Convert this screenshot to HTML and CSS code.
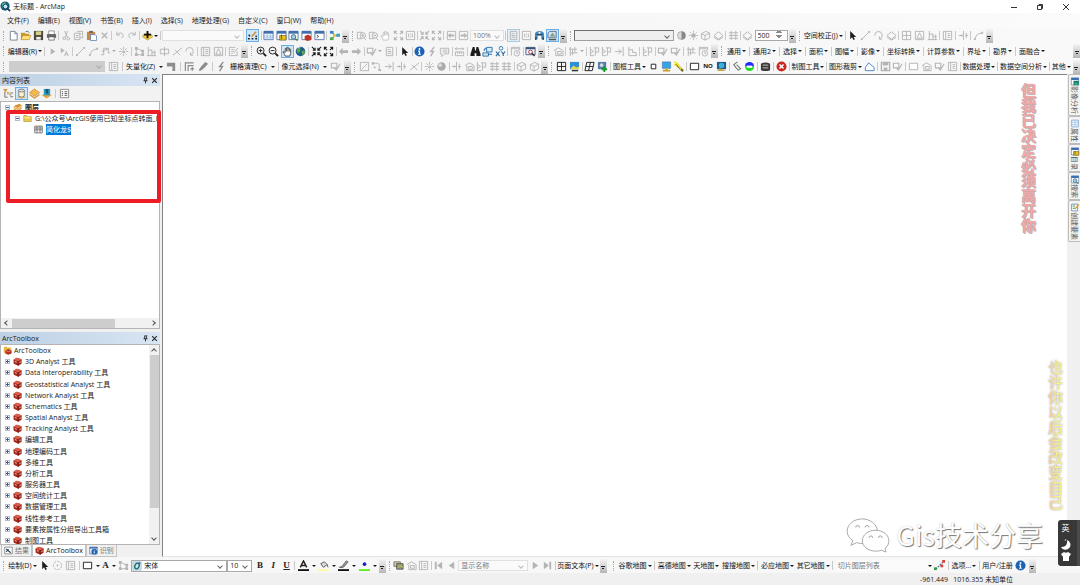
FILE: index.html
```
<!DOCTYPE html>
<html lang="zh-CN">
<head>
<meta charset="utf-8">
<title>无标题 - ArcMap</title>
<link rel="stylesheet" href="styles.css">
</head>
<body>
<svg class="sprite" aria-hidden="true">
  <defs>
    <symbol id="globe" viewBox="0 0 12 12"><circle cx="6" cy="6" r="5.2" fill="#1d5c8f"/><path d="M3 2q3-1 3 2t-3 4q-2-3 0-6zM7 6q3-2 4 0 0 3-3 4z" fill="#58a848"/><path d="M3 2q2-1 3-.5" stroke="#cfe6f5" fill="none"/></symbol>
    <symbol id="logo" viewBox="0 0 12 12"><circle cx="5.5" cy="5.5" r="5" fill="#185a7c"/><path d="M2 3l3-2 2 2-2 3-2 2z" fill="#4fb08a"/><circle cx="6" cy="6" r="2.6" fill="#bfe4f5" stroke="#173f58"/><path d="M8 8l3 3" stroke="#173f58" stroke-width="2"/></symbol>
    <symbol id="new" viewBox="0 0 12 12"><path d="M2.500 1.500h5l2.500 2.500v7h-7.500z" fill="#fff" stroke="#6e7f96"/><path d="M7.500 1.500v2.500h2.500" fill="none" stroke="#6e7f96"/></symbol>
    <symbol id="open" viewBox="0 0 12 12"><path d="M1 3h4l1 1h4v6H1z" fill="#c79a28"/><path d="M3 6h9l-2 4.500H1z" fill="#ffe07a" stroke="#a87d1c" stroke-width=".6"/><path d="M6 2q3-2 4 1" fill="none" stroke="#3b6ea5"/></symbol>
    <symbol id="save" viewBox="0 0 12 12"><path d="M1 1h10v10H1z" fill="#4a4a3a"/><path d="M3 1.500h6v4H3z" fill="#d8cf8a"/><path d="M3.500 7.500h5v3h-5z" fill="#eee"/></symbol>
    <symbol id="print" viewBox="0 0 12 12"><path d="M3 1h6v4H3z" fill="#fff" stroke="#777" stroke-width=".8"/><path d="M1 4.500h10v4H1z" fill="#666"/><path d="M3 7.500h6V11H3z" fill="#fff" stroke="#555" stroke-width=".8"/></symbol>
    <symbol id="cut" viewBox="0 0 12 12"><path d="M4 1l3 7M7 1L5 8" stroke="currentColor" fill="none"/><circle cx="3.500" cy="9" r="1.500" fill="none" stroke="currentColor"/><circle cx="8" cy="9.500" r="1.500" fill="none" stroke="currentColor"/></symbol>
    <symbol id="copy" viewBox="0 0 12 12"><path d="M1.500 3.500h6v7h-6zM4.500 1.500h6v7h-3M3 6h3M3 8h3M6 4h3" stroke="currentColor" fill="none"/></symbol>
    <symbol id="paste" viewBox="0 0 12 12"><path d="M1 2h9v9H1z" fill="#c88a4a"/><path d="M3.500 1h4v2h-4z" fill="#666"/><path d="M5 5h5l1.500 1.500V11.500H5z" fill="#fff" stroke="#4d77b8" stroke-width=".8"/></symbol>
    <symbol id="x" viewBox="0 0 12 12"><path d="M3 3l6 6M9 3L3 9" stroke="currentColor" stroke-width="1.500"/></symbol>
    <symbol id="undo" viewBox="0 0 12 12"><path d="M3 2v3.500h3.500M3 5q6-4 7 1 0 2-2 3" stroke="currentColor" fill="none"/></symbol>
    <symbol id="redo" viewBox="0 0 12 12"><path d="M9 2v3.500H5.500M9 5Q3 1 2 6q0 2 2 3" stroke="currentColor" fill="none"/></symbol>
    <symbol id="add" viewBox="0 0 12 12"><path d="M6 3l6 4-6 4-6-4z" fill="#f3cf3f" stroke="#b08a1c" stroke-width=".6"/><path d="M6 1v8M2 5h8" stroke="#111" stroke-width="2"/></symbol>
    <symbol id="edit" viewBox="0 0 12 12"><path d="M1 9.500h2M5 9.500h2M9 9.500h2M2 5l1 2M10 6v2" stroke="#222" stroke-width="1.500"/><path d="M5 7l5-5" stroke="#d28a2e" stroke-width="1.600"/></symbol>
    <symbol id="win" viewBox="0 0 12 12"><path d="M1 1.500h10v9H1z" fill="#fff" stroke="#5c7ba8"/><path d="M1 1h10v3H1z" fill="#3e6fb0"/></symbol>
    <symbol id="wtable" viewBox="0 0 12 12"><use href="#win"/><path d="M1 6.500h10M1 8.500h10M4.500 4v7M8 4v7" stroke="#8cb0de" stroke-width=".8"/></symbol>
    <symbol id="wcat" viewBox="0 0 12 12"><use href="#win"/><path d="M4 6h7v5H4z" fill="#e8c21d" stroke="#6b5a14" stroke-width=".7"/><path d="M6 5v5" stroke="#6b5a14"/></symbol>
    <symbol id="wsearch" viewBox="0 0 12 12"><use href="#win"/><circle cx="6" cy="7.500" r="2.500" fill="#9fd0e8" stroke="#3c6f85"/><path d="M8 9.500l2.500 2" stroke="#4d7a2d" stroke-width="1.400"/></symbol>
    <symbol id="wbox" viewBox="0 0 12 12"><use href="#win"/><path d="M4 6.500l4-1.500 3 2v4l-4 1-3-1.500z" fill="#c03427"/></symbol>
    <symbol id="wpy" viewBox="0 0 12 12"><use href="#win"/><path d="M3 5.500l2 1.500-2 1.500" stroke="#444" fill="none"/></symbol>
    <symbol id="wimg" viewBox="0 0 12 12"><use href="#win"/><path d="M4 5h7v6H4z" fill="#167a72"/><path d="M5 10l2-3 3 3z" fill="#57c85a"/></symbol>
    <symbol id="model" viewBox="0 0 12 12"><path d="M3 3l4 3-4 3M7 6h4" stroke="#555" fill="none"/><path d="M1 1h4v3H1z" fill="#3a86c8"/><path d="M1 8h4v3H1z" fill="#4aa84a"/><path d="M8 4h4v3.500H8z" fill="#3aa6c8"/><circle cx="6" cy="6" r="1.600" fill="#e6c232"/></symbol>
    <symbol id="zin" viewBox="0 0 12 12"><circle cx="5" cy="5" r="3.800" fill="none" stroke="currentColor"/><path d="M3 5h4M5 3v4" stroke="currentColor"/><path d="M8 8l3 3" stroke="currentColor" stroke-width="2"/></symbol>
    <symbol id="zout" viewBox="0 0 12 12"><circle cx="5" cy="5" r="3.800" fill="none" stroke="currentColor"/><path d="M3 5h4" stroke="currentColor"/><path d="M8 8l3 3" stroke="currentColor" stroke-width="2"/></symbol>
    <symbol id="hand" viewBox="0 0 12 12"><path d="M3.500 11Q3 9 1 6.500 2 5.500 3.500 7V3q1-1 1.500 0V1.800q1-1 1.500 0v.7q1-.800 1.500 0v1q1-.700 1.500.300V8L8.500 11zM5 3v3M6.500 2.500V6M8 3.500V6" fill="#fff" stroke="currentColor" stroke-width=".8"/></symbol>
    <symbol id="page" viewBox="0 0 12 12"><path d="M2.500 1.500h7v9h-7zM4 4h3M4 6h4M4 8h4" stroke="currentColor" fill="none"/></symbol>
    <symbol id="pzin" viewBox="0 0 12 12"><path d="M1.500 2.500h5v7h-5zM9 9l2 2" stroke="currentColor" fill="none"/><circle cx="7.500" cy="6" r="3" fill="#eee" stroke="currentColor"/><path d="M6 6h3M7.500 4.500v3" stroke="currentColor"/></symbol>
    <symbol id="pzout" viewBox="0 0 12 12"><path d="M1.500 2.500h5v7h-5zM9 9l2 2" stroke="currentColor" fill="none"/><circle cx="7.500" cy="6" r="3" fill="#eee" stroke="currentColor"/><path d="M6 6h3" stroke="currentColor"/></symbol>
    <symbol id="pback" viewBox="0 0 12 12"><path d="M1.500 1.500h9v9h-9z" fill="none" stroke="currentColor"/><path d="M2 6l3-3v2h4v2H5v2z" fill="currentColor"/></symbol>
    <symbol id="pfwd" viewBox="0 0 12 12"><path d="M1.500 1.500h9v9h-9z" fill="none" stroke="currentColor"/><path d="M10 6L7 3v2H3v2h4v2z" fill="currentColor"/></symbol>
    <symbol id="one" viewBox="0 0 12 12"><path d="M1.500 1.500h9v9h-9zM4 4v4M8 4v4M6 4v1M6 7v1" stroke="currentColor" fill="none"/></symbol>
    <symbol id="in4" viewBox="0 0 12 12"><path d="M1 1l3 3M11 1L8 4M1 11l3-3M11 11L8 8M4.500 2v2.500H2M7.500 2v2.500H10M4.500 10V7.500H2M7.500 10V7.500H10" stroke="currentColor" fill="none" stroke-width="1.200"/></symbol>
    <symbol id="out4" viewBox="0 0 12 12"><path d="M1.500 4V1.500H4M8 1.500h2.500V4M1.500 8v2.500H4M8 10.500h2.500V8M2 2l2.500 2.500M10 2L7.500 4.500M2 10l2.500-2.500M10 10L7.500 7.500" stroke="currentColor" fill="none" stroke-width="1.200"/></symbol>
    <symbol id="left" viewBox="0 0 12 12"><path d="M1 6l4-4v2.500h6v3H5V10z" fill="currentColor"/></symbol>
    <symbol id="right" viewBox="0 0 12 12"><path d="M11 6L7 2v2.500H1v3h6V10z" fill="currentColor"/></symbol>
    <symbol id="cursor" viewBox="0 0 12 12"><path d="M3.500 1v9l2-2 1.500 3 1.600-.800L7.200 7.500H10z" fill="currentColor"/></symbol>
    <symbol id="play" viewBox="0 0 12 12"><path d="M4 2.500v7L9 6z" fill="currentColor"/></symbol>
    <symbol id="playa" viewBox="0 0 12 12"><path d="M2 2v6l4-3z" fill="currentColor"/><path d="M6 11l2-5 2 5M7 9h2" stroke="currentColor" fill="none"/></symbol>
    <symbol id="line" viewBox="0 0 12 12"><path d="M2.500 9.500l7-7" stroke="currentColor"/><path d="M1 9h2v2H1zM9 1h2v2H9z" fill="currentColor"/></symbol>
    <symbol id="arc" viewBox="0 0 12 12"><path d="M2.500 9.500q1-6 7-6" stroke="currentColor" fill="none"/><path d="M1 9h2v2H1zM9 2h2v2H9z" fill="currentColor"/></symbol>
    <symbol id="trace" viewBox="0 0 12 12"><path d="M1 9.500h3v-7h5v5h2M2 6l7-3" stroke="currentColor" fill="none"/></symbol>
    <symbol id="star" viewBox="0 0 12 12"><path d="M6 1v10M1 6h10M2.500 2.500l7 7M9.500 2.500l-7 7" stroke="currentColor" stroke-dasharray="3 1"/></symbol>
    <symbol id="poly" viewBox="0 0 12 12"><path d="M2.500 2.500l7 3v4l-7 0z" stroke="currentColor" fill="none"/><path d="M1 1h3v3H1zM8 4h3v3H8zM1 8h3v3H1zM8 8h3v3H8z" fill="currentColor"/></symbol>
    <symbol id="bars" viewBox="0 0 12 12"><path d="M2.500 1v10M2.500 4.500h4M6.500 4v7M6.500 7h4M9.500 5v6M1 10.500h10" stroke="currentColor" fill="none"/></symbol>
    <symbol id="split" viewBox="0 0 12 12"><path d="M1.500 3.500h9v5h-9zM6 1v10" stroke="currentColor" fill="none"/></symbol>
    <symbol id="cross" viewBox="0 0 12 12"><path d="M1 10l10-8M3 4l6 6" stroke="currentColor"/></symbol>
    <symbol id="rot" viewBox="0 0 12 12"><path d="M2 6a4 4 0 1 1 5 3.500M7 7v3h3" stroke="currentColor" fill="none"/></symbol>
    <symbol id="grid" viewBox="0 0 12 12"><path d="M1.500 1.500h9v9h-9zM1.500 6h9M6 1.500v9" stroke="currentColor" fill="none"/></symbol>
    <symbol id="attr" viewBox="0 0 12 12"><path d="M1.500 1.500h9v9h-9zM4 1.500v9M6 4h3M6 6h3M6 8h3" stroke="currentColor" fill="none"/></symbol>
    <symbol id="atri" viewBox="0 0 12 12"><path d="M1.500 1.500h9v9h-9zM3 9l3-6 3 6z" stroke="currentColor" fill="none"/></symbol>
    <symbol id="slash" viewBox="0 0 12 12"><path d="M1.500 1.500h9v9h-9zM3 9l6-6" stroke="currentColor" fill="none"/></symbol>
    <symbol id="fillet" viewBox="0 0 12 12"><path d="M2 2.500h5q2 0 2 2v6" stroke="currentColor" fill="none"/><path d="M1 1h2v3H1zM8 9h3v2H8zM3 6h2v2H3z" fill="currentColor"/></symbol>
    <symbol id="note" viewBox="0 0 12 12"><path d="M10 6v4.500H1.500v-9H8M3.500 4H7M3.500 6H6M3.500 8H5M6 8l5-6" stroke="currentColor" fill="none"/></symbol>
    <symbol id="bolt" viewBox="0 0 12 12"><path d="M8 1L4 6h3l-3 5" stroke="currentColor" fill="none" stroke-width="1.500"/></symbol>
    <symbol id="popup" viewBox="0 0 12 12"><path d="M1.500 2.500h9v6H6l-3 3v-3H1.500zM4 4.500h5M4 6.500h5" stroke="currentColor" fill="none"/></symbol>
    <symbol id="ruler" viewBox="0 0 12 12"><path d="M1.500 6.500h9v4h-9zM4 6.500v2M6 6.500v2M8 6.500v2M1 3h10M3 1.500L1.500 3 3 4.500M9 1.500L10.500 3 9 4.500" stroke="currentColor" fill="none"/></symbol>
    <symbol id="info" viewBox="0 0 12 12"><circle cx="6" cy="6" r="5.500" fill="#1c62b5"/><circle cx="6" cy="3.300" r="1" fill="#fff"/><path d="M4.500 5.500H6V9M4.500 9h3" stroke="#fff" fill="none" stroke-width="1.300"/></symbol>
    <symbol id="bino" viewBox="0 0 12 12"><path d="M3 1h2l.500 4h1L7 1h2l2.500 8v2H7V8H5v3H.500V9z" fill="currentColor"/></symbol>
    <symbol id="bluebino" viewBox="0 0 12 12"><path d="M1 5q0-4 5-4t5 4v5H8V6H4v4H1z" fill="#4786b8"/><path d="M3 5h6M2 8v3M10 8v3" stroke="#29435a" stroke-width="1.500"/><path d="M5 2h2v2H5z" fill="#fff"/></symbol>
    <symbol id="goto" viewBox="0 0 12 12"><path d="M5 1.500h6v5H5zM1 7.500h6v3.500H1z" fill="#d9ecf9" stroke="#2870ad"/><path d="M2 5l2-3M7 9h4" stroke="#2870ad" stroke-width="1.200"/></symbol>
    <symbol id="xy" viewBox="0 0 12 12"><circle cx="6.500" cy="2.500" r="2" fill="none" stroke="#2c77b0"/><path d="M1 6l4 5M5 6l-4 5M7 6l2 2.500L11 6M9 8.500V11" stroke="#2364a0" stroke-width="1.200" fill="none"/></symbol>
    <symbol id="clock" viewBox="0 0 12 12"><path d="M1.500 10.500v-9h9V5M1 3h9" stroke="currentColor" fill="none"/><circle cx="7.500" cy="8" r="3" fill="none" stroke="currentColor"/><path d="M7.500 6v2h1.500" stroke="currentColor" fill="none"/></symbol>
    <symbol id="viewer" viewBox="0 0 12 12"><path d="M1 1.500h10v8H1z" fill="#eef" stroke="#4b5f7c"/><path d="M1 2.500h10" stroke="#35557f" stroke-width="2"/><circle cx="6" cy="6.500" r="2" fill="#fff" stroke="#a33"/><path d="M7.500 8l3 3" stroke="#333" stroke-width="1.600"/></symbol>
    <symbol id="pic" viewBox="0 0 12 12"><path d="M3 1.500h7v7H1v-5z" fill="#cfe0ee" stroke="#56728c"/><path d="M3 7l3-4 3 4z" fill="#7f9a7c"/><path d="M2 10.500h8" stroke="#555" stroke-width="1.500"/></symbol>
    <symbol id="half" viewBox="0 0 12 12"><circle cx="6" cy="6" r="4.300" fill="#ddd" stroke="#aaa"/><path d="M6 1.700a4.300 4.300 0 0 1 0 8.600z" fill="#888"/></symbol>
    <symbol id="sun" viewBox="0 0 12 12"><circle cx="6" cy="6" r="2.500" fill="currentColor"/><path d="M6 1v2M6 9v2M1 6h2M9 6h2M2.500 2.500l1 1M8.500 8.500l1 1M9.500 2.500l-1 1M3.500 8.500l-1 1" stroke="currentColor"/></symbol>
    <symbol id="dia" viewBox="0 0 12 12"><path d="M6 2l5 4-5 4-5-4zM1 8l5 3 5-3" fill="none" stroke="currentColor"/></symbol>
    <symbol id="house" viewBox="0 0 12 12"><path d="M1 5l5-3 5 3v5.500H3V5M5 6h4v3H5z" fill="none" stroke="currentColor"/></symbol>
    <symbol id="net" viewBox="0 0 12 12"><path d="M2.500 1v10M1 3.500h9M7.500 1v6M2.500 7.500h8M5 3.500V10" fill="none" stroke="currentColor"/></symbol>
    <symbol id="topo" viewBox="0 0 12 12"><path d="M1.500 1v9.500h4M1.500 3.500L5 6 1.500 8M5.500 2h5v4M7 2v8.500M7 6.500h4" fill="none" stroke="currentColor"/></symbol>
    <symbol id="check" viewBox="0 0 12 12"><path d="M1.500 2.500h6v5h-6zM4 7l3 3 4-7" fill="none" stroke="currentColor" stroke-width="1.200"/></symbol>
    <symbol id="vert" viewBox="0 0 12 12"><path d="M1 6h3M8 6h3M6 1v10M9 3v6" fill="none" stroke="currentColor"/><path d="M3 5h2v2H3z" fill="currentColor"/></symbol>
    <symbol id="ext" viewBox="0 0 12 12"><path d="M1 6h7M10 1v10M5 3.500L8 6 5 8.500" fill="none" stroke="currentColor"/></symbol>
    <symbol id="stair" viewBox="0 0 12 12"><path d="M2 1v9.500h9M2 4h4v3h4v3" fill="none" stroke="currentColor"/></symbol>
    <symbol id="hatch" viewBox="0 0 12 12"><path d="M1 3h10M1 6h10M1 9h10M3.500 1v10M8.500 1v10" fill="none" stroke="currentColor"/></symbol>
    <symbol id="sphere" viewBox="0 0 12 12"><circle cx="6" cy="6" r="4.600" fill="#aaa"/><circle cx="4.500" cy="4.500" r="2" fill="#ddd"/></symbol>
    <symbol id="boxes" viewBox="0 0 12 12"><path d="M1.500 4l5-2.500 4 2v5l-5 2.500-4-2zM1.500 4l4 2 5-2.500M5.500 6v5" fill="none" stroke="currentColor"/></symbol>
    <symbol id="pen" viewBox="0 0 12 12"><path d="M1 10q0-2 7-9l3 2q-6 7-9 8z" fill="currentColor"/></symbol>
    <symbol id="corner" viewBox="0 0 12 12"><path d="M1.500 11V2h9M4.500 11V5h6M7 8.500h4M9 6.500v4" fill="none" stroke="currentColor" stroke-width="1.300"/></symbol>
    <symbol id="stamp" viewBox="0 0 12 12"><path d="M1 2h9v9H7V6H1z" fill="currentColor"/></symbol>
    <symbol id="pcimg" viewBox="0 0 12 12"><path d="M1 1h10v8H1z" fill="#2e8ed6"/><path d="M1 9l4-4 3 2 3-1v3z" fill="#e6d44a"/><path d="M3 10.500h7" stroke="#333" stroke-width="1.500"/></symbol>
    <symbol id="skew" viewBox="0 0 12 12"><path d="M3 1.500h8l-2 9H1zM2 6h8M7 1.500l-2 9" fill="none" stroke="currentColor"/></symbol>
    <symbol id="pcadd" viewBox="0 0 12 12"><path d="M1 1h9v8H1z" fill="#557da6"/><circle cx="5" cy="4.500" r="2" fill="#cfd9e3"/><path d="M8 6v6M5 9h6" stroke="#159a2a" stroke-width="2"/></symbol>
    <symbol id="sq" viewBox="0 0 12 12"><path d="M3.500 3.500h5v5h-5z" fill="#fff" stroke="currentColor"/></symbol>
    <symbol id="rect" viewBox="0 0 12 12"><path d="M1.500 2.500h9v7h-9z" fill="#fff" stroke="currentColor"/></symbol>
    <symbol id="pc" viewBox="0 0 12 12"><path d="M1.500 1h9v7h-9z" fill="#38a2e6" stroke="#3570a0" stroke-width=".6"/><path d="M6 8v2M2 10.500h8" stroke="#c99d2b" stroke-width="2"/></symbol>
    <symbol id="wand" viewBox="0 0 12 12"><path d="M3 3l8 8" stroke="#6d6a2a" stroke-width="2.500"/><path d="M1 1l5 3M3 1l6 8M1 4l3 1" stroke="#f4e52c" stroke-width="1.500"/></symbol>
    <symbol id="pcglobe" viewBox="0 0 12 12"><path d="M1 1h10v8H1z" fill="#1f5a8c"/><circle cx="6" cy="5" r="3" fill="#3db0dd"/><path d="M1 11l3-3 7 3z" fill="#caa43a"/></symbol>
    <symbol id="call" viewBox="0 0 12 12"><path d="M6 1L2 4l2 3 3 3 3-2M5 4l4 4" fill="none" stroke="#777" stroke-width="1.200"/></symbol>
    <symbol id="disc" viewBox="0 0 12 12"><path d="M1 6a5 5 0 0 1 10 0z" fill="#1c2bff"/><path d="M1 6a5 5 0 0 0 10 0z" fill="#1ce01c"/><path d="M3 5h6v2.500H3z" fill="#fff"/></symbol>
    <symbol id="db" viewBox="0 0 12 12"><path d="M1 3q5-3 10 0v7q-5 2-10 0z" fill="#3a3a3a"/><path d="M3 4.500h6M3 7.500h6" stroke="#ccc"/></symbol>
    <symbol id="err" viewBox="0 0 12 12"><circle cx="6" cy="6" r="5.500" fill="#c9281f"/><path d="M3.800 3.800l4.400 4.400M8.200 3.800L3.800 8.200" stroke="#fff" stroke-width="1.600"/></symbol>
    <symbol id="penta" viewBox="0 0 12 12"><path d="M1.500 10.500V7L5 2l6 5v3.500z" fill="#fff" stroke="#3e86cf"/></symbol>
    <symbol id="dsave" viewBox="0 0 12 12"><path d="M1.500 1.500h9v9h-9z" fill="none" stroke="currentColor" stroke-width="1.500"/><path d="M3 2h6v3H3zM4 7h4v4H4z" fill="currentColor"/></symbol>
    <symbol id="toolbox" viewBox="0 0 12 12"><path d="M.5 3.500L5 1l6.500 2v6L7 11.500 1 9z" fill="#a5281d"/><path d="M.5 3.500L5 1l6.500 2L7 5.500z" fill="#d9604e"/><path d="M7 5.500v6" stroke="#741610"/><path d="M2.500 6l2.500 1M8.500 7.500l2-1" stroke="#f3d0c8" stroke-width="1.200"/></symbol>
    <symbol id="tbroot" viewBox="0 0 12 12"><path d="M1 1h4l1 1h5v7H1z" fill="#e6bd45"/><path d="M3 6l4-2 4.500 2v4L7 11.500 3 10z" fill="#b93123"/><path d="M3 6l4 1.500L11.500 6" stroke="#e88d7e" fill="none"/></symbol>
    <symbol id="layers" viewBox="0 0 12 12"><path d="M3 3l6-2 2.500 2v5L6 11 1 9V5z" fill="#d8913a"/><path d="M1 5l5 2 5.500-3M1 7l5 2 5.500-3" stroke="#fff0b8" fill="none"/></symbol>
    <symbol id="folder" viewBox="0 0 12 12"><path d="M1 2h4l1 1.500h5V10H1z" fill="#e9c84e" stroke="#a8842b" stroke-width=".7"/><path d="M2 5h8" stroke="#fff2ae" stroke-width="1.500"/></symbol>
    <symbol id="tbl" viewBox="0 0 12 12"><path d="M1 1.500h10v9H1z" fill="#fff" stroke="#555"/><path d="M1 4h10M1 6.500h10M4 1.500v9M8 1.500v9" stroke="#555"/></symbol>
    <symbol id="torder" viewBox="0 0 12 12"><path d="M0 1l5 0-2 4z" fill="#d99a3c"/><path d="M4 4l4 1-3 3z" fill="#e0ae5a"/><path d="M2 4v6h3M8 5.500h3M8 9.500h3M7 7.500h2" stroke="#6f6f6f" fill="none"/></symbol>
    <symbol id="tsource" viewBox="0 0 12 12"><path d="M3 3q3-2 6 0v6q-3 2-6 0z" fill="#fff3c8" stroke="#7c7c7c"/><ellipse cx="6" cy="2.800" rx="3.200" ry="1.500" fill="#e3e3e3" stroke="#777"/><path d="M2 10q4 2 8 0" fill="none" stroke="#c9a23c"/></symbol>
    <symbol id="tvis" viewBox="0 0 12 12"><path d="M6 1l5.500 4L6 9 .500 5z" fill="#f2b84a" stroke="#b27a22" stroke-width=".6"/><path d="M.500 7L6 11l5.500-4" fill="none" stroke="#d2963a" stroke-width="1.300"/></symbol>
    <symbol id="tsel" viewBox="0 0 12 12"><path d="M1 8l5 3.500L11.500 8 6 5z" fill="#e8a63a"/><path d="M3 1h7v7H3z" fill="#2f9dc2"/><path d="M5 1v4l3 2V1" fill="#1b5a76"/></symbol>
    <symbol id="list" viewBox="0 0 12 12"><path d="M1.500 1.500h9v9h-9z" fill="#fff" stroke="#888"/><path d="M3 4h1.500M6 4h3M3 6h1.500M6 6h3M3 8h1.500M6 8h3" stroke="#555"/></symbol>
    <symbol id="pin" viewBox="0 0 12 12"><path d="M4 1.500h5M4.500 2v4.500M7.500 2v4.500M2.500 6.500h7M6 6.500V11" stroke="#222" stroke-width="1.500" fill="none"/></symbol>
    <symbol id="close" viewBox="0 0 12 12"><path d="M2 2l8 8M10 2l-8 8" stroke="#222" stroke-width="1.800"/></symbol>
    <symbol id="result" viewBox="0 0 12 12"><path d="M1 1.500h10v9H1z" fill="#fff" stroke="#777"/><path d="M3 4l6 5M3 8l3-4" stroke="#345" stroke-width="1.500"/></symbol>
    <symbol id="ident" viewBox="0 0 12 12"><path d="M1 1.500h10v9H1z" fill="#fff" stroke="#4c6fa0"/><path d="M1 2.500h10" stroke="#3b6cb0" stroke-width="2"/><circle cx="7" cy="7.500" r="3.800" fill="#1c62b5"/><path d="M7 5v1M7 7v3" stroke="#fff" stroke-width="1.300"/></symbol>
    <symbol id="create" viewBox="0 0 12 12"><path d="M1.500 1.500h8v9h-8z" fill="#fff" stroke="#5a7ba5"/><path d="M3 4h3M3 7h3" stroke="#3f9e55" stroke-width="1.500"/><path d="M6 8l5-6" stroke="#e0a030" stroke-width="1.800"/></symbol>
    <symbol id="lista" viewBox="0 0 12 12"><path d="M1.500 1.500h9v9h-9z" fill="#e8f3ff" stroke="#7da0c8"/><path d="M6 2v8M2 4.500h8M2 7.500h8" stroke="#a9c8e8"/></symbol>
    <symbol id="font" viewBox="0 0 12 12"><path d="M1 1h10v10H1z" fill="#cfe3f2" stroke="#7aa0b8" stroke-width=".6"/><ellipse cx="6" cy="6" rx="2.500" ry="3.500" fill="none" stroke="#186a60" stroke-width="1.500" transform="rotate(25 6 6)"/><path d="M8 2l2 1" stroke="#2a4ad0" stroke-width="1.500"/></symbol>
    <symbol id="acol" viewBox="0 0 12 12"><path d="M2.500 8L6 1l3.500 7M4 6h4" stroke="#222" stroke-width="1.600" fill="none"/><path d="M0 10h12v2H0z" fill="#111"/></symbol>
    <symbol id="fill" viewBox="0 0 12 12"><path d="M3 4l4-2 3 3-4 3zM10 5l1 3" fill="#ddd" stroke="#555"/><path d="M0 10h12v2H0z" fill="#fdf8a4"/></symbol>
    <symbol id="brush" viewBox="0 0 12 12"><path d="M1 8q3 0 4-2l4-5 2 1-4 5q-2 2-5 1" fill="#999" stroke="#444" stroke-width=".7"/><path d="M0 10h12v2H0z" fill="#111"/></symbol>
    <symbol id="mark" viewBox="0 0 12 12"><circle cx="6" cy="4.500" r="2" fill="#1421c8"/><path d="M0 10h12v2H0z" fill="#5cf01a"/></symbol>
    <symbol id="rcirc" viewBox="0 0 12 12"><circle cx="6" cy="6" r="4.500" fill="none" stroke="currentColor" stroke-dasharray="3 1"/><circle cx="6" cy="6" r="1" fill="currentColor"/></symbol>
    <symbol id="ddp" viewBox="0 0 12 12"><path d="M1 2h7v5H1z" fill="#cfc9a8" stroke="#776"/><path d="M4 4h7v6H4z" fill="#8ea07a" stroke="#555"/><path d="M5 9l3-3 3 2" stroke="#e2c040" fill="none"/></symbol>
    <symbol id="first" viewBox="0 0 12 12"><path d="M2 2h2v8H2zM10 2v8L4.500 6z" fill="currentColor"/></symbol>
    <symbol id="prev" viewBox="0 0 12 12"><path d="M9 2v8L3 6z" fill="currentColor"/></symbol>
    <symbol id="next" viewBox="0 0 12 12"><path d="M3 2v8l6-4z" fill="currentColor"/></symbol>
    <symbol id="last" viewBox="0 0 12 12"><path d="M8 2h2v8H8zM2 2v8l5.500-4z" fill="currentColor"/></symbol>
    <symbol id="gline" viewBox="0 0 12 12"><path d="M2 10l4-4 4-4" stroke="#2f6ca8" stroke-width="1.200" stroke-dasharray="2 1"/><path d="M0 8h3v3H0z" fill="#2f9a3d"/><path d="M9 0h3v3H9zM7 5h3v3H7z" fill="#e03c2c"/></symbol>
  </defs>
</svg>

<div class="app">
  <header class="title">
    <svg class="ico"><use href="#logo"/></svg>
    <h1>无标题 - ArcMap</h1>
    <div class="winbtns">
      <button aria-label="最小化"><svg viewBox="0 0 8 8"><path d="M1 4.500h6"/></svg></button>
      <button aria-label="还原"><svg viewBox="0 0 8 8"><path d="M1.500 2.500h4v4h-4zM3 2.500v-1h3.500v4h-1"/></svg></button>
      <button aria-label="关闭"><svg viewBox="0 0 8 8"><path d="M1 1l6 6M7 1L1 7"/></svg></button>
    </div>
  </header>
  <nav class="menu">
    <button>文件(F)</button><button>编辑(E)</button><button>视图(V)</button><button>书签(B)</button><button>插入(I)</button><button>选择(S)</button><button>地理处理(G)</button><button>自定义(C)</button><button>窗口(W)</button><button>帮助(H)</button>
  </nav>

  <div class="toolbars">
    <div class="row">
      <div class="band w347">
        <i class="grip"></i>
        <button aria-label="新建"><svg><use href="#new"/></svg></button><button aria-label="打开"><svg><use href="#open"/></svg></button><button aria-label="保存"><svg><use href="#save"/></svg></button><button aria-label="打印"><svg><use href="#print"/></svg></button><i class="sep"></i>
        <button aria-label="剪切"><svg><use href="#cut"/></svg></button><button aria-label="复制"><svg><use href="#copy"/></svg></button><button aria-label="粘贴"><svg><use href="#paste"/></svg></button><button aria-label="删除"><svg><use href="#x"/></svg></button><i class="sep"></i>
        <button aria-label="撤消"><svg><use href="#undo"/></svg></button><button aria-label="恢复"><svg><use href="#redo"/></svg></button><i class="sep"></i>
        <button class="drop" aria-label="添加数据"><svg><use href="#add"/></svg></button><i class="sep"></i>
        <span class="combo w82 pale"><select aria-label="比例"><option></option></select></span>
        <button class="on" aria-label="编辑器工具条"><svg><use href="#edit"/></svg></button><i class="sep"></i>
        <button aria-label="内容列表"><svg><use href="#wtable"/></svg></button><button aria-label="目录"><svg><use href="#wcat"/></svg></button><button aria-label="搜索"><svg><use href="#wsearch"/></svg></button><button aria-label="工具箱"><svg><use href="#wbox"/></svg></button><button aria-label="Python"><svg><use href="#wpy"/></svg></button><i class="sep"></i>
        <button aria-label="模型构建器"><svg><use href="#model"/></svg></button>
        <button class="more" aria-label="更多"></button>
      </div>
      <div class="band w216">
        <i class="grip"></i>
        <button aria-label="放大"><svg><use href="#pzin"/></svg></button><button aria-label="缩小"><svg><use href="#pzout"/></svg></button><button aria-label="平移"><svg><use href="#hand"/></svg></button><button aria-label="全页"><svg><use href="#out4"/></svg></button><button aria-label="1:1"><svg><use href="#one"/></svg></button><i class="sep"></i>
        <button aria-label="固定放大"><svg><use href="#in4"/></svg></button><button aria-label="固定缩小"><svg><use href="#out4"/></svg></button><i class="sep"></i>
        <button aria-label="后退"><svg><use href="#pback"/></svg></button><button aria-label="前进"><svg><use href="#pfwd"/></svg></button>
        <span class="combo w34 pale"><select aria-label="缩放比"><option>100%</option></select></span><i class="sep"></i>
        <button class="on soft" aria-label="草图"><svg><use href="#page"/></svg></button><button aria-label="焦点"><svg><use href="#one"/></svg></button><button aria-label="更改布局"><svg><use href="#bluebino"/></svg></button><button class="on" aria-label="数据驱动页面"><svg><use href="#pic"/></svg></button>
        <button class="more" aria-label="更多"></button>
      </div>
      <div class="band w227">
        <i class="grip"></i>
        <span class="combo w100 sunk"><select aria-label="图层"><option></option></select></span>
        <button aria-label="对比度"><svg><use href="#half"/></svg></button><button aria-label="亮度"><svg><use href="#sun"/></svg></button><button aria-label="透明度"><svg><use href="#boxes"/></svg></button><button aria-label="卷帘"><svg><use href="#dia"/></svg></button><i class="sep"></i>
        <button aria-label="影像"><svg><use href="#hatch"/></svg></button><i class="sep"></i>
        <button aria-label="闪烁"><svg><use href="#dia"/></svg></button>
        <input class="num" type="number" value="500" aria-label="毫秒">
        <button class="more" aria-label="更多"></button>
      </div>
      <div class="band w195">
        <i class="grip"></i>
        <button class="txt">空间校正(J)</button><i class="sep"></i>
        <button class="dark" aria-label="选择"><svg><use href="#cursor"/></svg></button><button aria-label="新建位移链接"><svg><use href="#line"/></svg></button><button aria-label="修改链接"><svg><use href="#rot"/></svg></button><button aria-label="多位移"><svg><use href="#dia"/></svg></button><i class="sep"></i>
        <button aria-label="标识链接"><svg><use href="#grid"/></svg></button><button aria-label="受限区域"><svg><use href="#atri"/></svg></button><button aria-label="清除"><svg><use href="#bars"/></svg></button><i class="sep"></i>
        <button aria-label="链接表"><svg><use href="#attr"/></svg></button><i class="sep"></i><button aria-label="边捕捉"><svg><use href="#vert"/></svg></button><i class="sep"></i><button aria-label="属性传递"><svg><use href="#arc"/></svg></button>
        <button class="more" aria-label="更多"></button>
      </div>
    </div>

    <div class="row">
      <div class="band w246">
        <i class="grip"></i>
        <button class="txt">编辑器(R)</button><i class="sep"></i>
        <button aria-label="编辑"><svg><use href="#play"/></svg></button><button aria-label="编辑注记"><svg><use href="#playa"/></svg></button><i class="sep"></i>
        <button aria-label="直线段"><svg><use href="#line"/></svg></button><button aria-label="弧段"><svg><use href="#arc"/></svg></button><button class="drop faint" aria-label="追踪"><svg><use href="#trace"/></svg></button><button aria-label="点"><svg><use href="#star"/></svg></button><i class="sep"></i>
        <button aria-label="编辑折点"><svg><use href="#poly"/></svg></button><button aria-label="整形"><svg><use href="#bars"/></svg></button><button aria-label="裁剪面"><svg><use href="#split"/></svg></button><button aria-label="分割"><svg><use href="#cross"/></svg></button><button aria-label="旋转"><svg><use href="#rot"/></svg></button><i class="sep"></i>
        <button aria-label="属性"><svg><use href="#attr"/></svg></button><button aria-label="草图属性"><svg><use href="#atri"/></svg></button><i class="sep"></i>
        <button aria-label="创建要素"><svg><use href="#note"/></svg></button>
        <button class="more" aria-label="更多"></button>
      </div>
      <div class="band w295">
        <i class="grip"></i>
        <button class="dark" aria-label="放大"><svg><use href="#zin"/></svg></button><button class="dark" aria-label="缩小"><svg><use href="#zout"/></svg></button><button class="on dark" aria-label="平移"><svg><use href="#hand"/></svg></button><button aria-label="全图"><svg><use href="#globe"/></svg></button><i class="sep"></i>
        <button class="dark" aria-label="固定放大"><svg><use href="#in4"/></svg></button><button class="dark" aria-label="固定缩小"><svg><use href="#out4"/></svg></button><i class="sep"></i>
        <button aria-label="后退"><svg><use href="#left"/></svg></button><button aria-label="前进"><svg><use href="#right"/></svg></button><i class="sep"></i>
        <button class="drop faint" aria-label="选择要素"><svg><use href="#check"/></svg></button><button aria-label="清除选择"><svg><use href="#page"/></svg></button><i class="sep"></i>
        <button class="dark" aria-label="选择元素"><svg><use href="#cursor"/></svg></button><i class="sep"></i>
        <button aria-label="识别"><svg><use href="#info"/></svg></button><button aria-label="超链接"><svg><use href="#bolt"/></svg></button><button aria-label="HTML弹窗"><svg><use href="#popup"/></svg></button><i class="sep"></i>
        <button aria-label="测量"><svg><use href="#ruler"/></svg></button><i class="sep"></i>
        <button class="dark" aria-label="查找"><svg><use href="#bino"/></svg></button><button aria-label="查找路径"><svg><use href="#goto"/></svg></button><button aria-label="转到XY"><svg><use href="#xy"/></svg></button><i class="sep"></i>
        <button aria-label="时间滑块"><svg><use href="#clock"/></svg></button><i class="sep"></i><button aria-label="查看器"><svg><use href="#viewer"/></svg></button>
        <button class="more" aria-label="更多"></button>
      </div>
      <div class="band w171">
        <i class="grip"></i>
        <button aria-label="拓扑"><svg><use href="#house"/></svg></button><i class="sep"></i><button class="drop faint" aria-label="拓扑编辑"><svg><use href="#net"/></svg></button><i class="sep"></i>
        <button aria-label="修改边"><svg><use href="#topo"/></svg></button><button aria-label="整形边"><svg><use href="#topo"/></svg></button><button aria-label="对齐边"><svg><use href="#ext"/></svg></button><button aria-label="概化边"><svg><use href="#stair"/></svg></button><i class="sep"></i>
        <button aria-label="共享要素"><svg><use href="#topo"/></svg></button><i class="sep"></i>
        <button aria-label="验证"><svg><use href="#check"/></svg></button><button aria-label="验证范围"><svg><use href="#check"/></svg></button><i class="sep"></i>
        <button aria-label="修复"><svg><use href="#net"/></svg></button><button aria-label="检查器"><svg><use href="#clock"/></svg></button>
        <button class="more" aria-label="更多"></button>
      </div>
      <div class="band grow texts">
        <i class="grip"></i>
        <button class="txt">通用</button><i class="sep"></i><button class="txt">通用2</button><i class="sep"></i><button class="txt">选择</button><i class="sep"></i><button class="txt">面积</button><i class="sep"></i><button class="txt">图幅</button><i class="sep"></i><button class="txt">影像</button><i class="sep"></i><button class="txt">坐标转换</button><i class="sep"></i><button class="txt">计算参数</button><i class="sep"></i><button class="txt">界址</button><i class="sep"></i><button class="txt">勘界</button><i class="sep"></i><button class="txt">面融合</button>
        <button class="more end" aria-label="更多"></button>
      </div>
    </div>

    <div class="row">
      <div class="band w349">
        <i class="grip"></i>
        <span class="combo w96 gray"><select aria-label="栅格图层" disabled><option></option></select></span>
        <button aria-label="栅格"><svg><use href="#attr"/></svg></button><i class="sep"></i>
        <button class="txt wide">矢量化(Z)</button><button class="mid" aria-label="矢量化设置"><svg><use href="#stamp"/></svg></button><i class="sep"></i>
        <button class="mid" aria-label="追踪间"><svg><use href="#corner"/></svg></button><button class="mid" aria-label="擦除"><svg><use href="#pen"/></svg></button><i class="sep"></i><button class="mid" aria-label="魔术擦除"><svg><use href="#bolt"/></svg></button>
        <button class="txt wide">栅格清理(C)</button><i class="sep"></i><button class="txt wide">像元选择(N)</button><button aria-label="选择像元"><svg><use href="#check"/></svg></button>
        <button class="more" aria-label="更多"></button>
      </div>
      <div class="band w195">
        <i class="grip"></i>
        <button aria-label="构造"><svg><use href="#slash"/></svg></button><button aria-label="内圆角"><svg><use href="#fillet"/></svg></button><button aria-label="延伸"><svg><use href="#ext"/></svg></button><button aria-label="修剪"><svg><use href="#vert"/></svg></button><button aria-label="相交"><svg><use href="#cross"/></svg></button><i class="sep"></i>
        <button aria-label="分解"><svg><use href="#star"/></svg></button><button aria-label="球体"><svg><use href="#sphere"/></svg></button><i class="sep"></i>
        <button aria-label="打断"><svg><use href="#vert"/></svg></button><button aria-label="构造面"><svg><use href="#house"/></svg></button><button aria-label="分割面"><svg><use href="#topo"/></svg></button><button aria-label="概化"><svg><use href="#hatch"/></svg></button><button aria-label="平滑"><svg><use href="#hatch"/></svg></button><i class="sep"></i>
        <button aria-label="替换"><svg><use href="#boxes"/></svg></button><button aria-label="对齐"><svg><use href="#boxes"/></svg></button>
        <button class="more" aria-label="更多"></button>
      </div>
      <div class="band grow">
        <i class="grip"></i>
        <button class="dark" aria-label="格网"><svg><use href="#grid"/></svg></button><button aria-label="影像图"><svg><use href="#pcimg"/></svg></button><i class="sep"></i>
        <button class="dark" aria-label="斜格网"><svg><use href="#skew"/></svg></button><button aria-label="添加图"><svg><use href="#pcadd"/></svg></button><i class="sep"></i>
        <button class="txt">图框工具</button><button class="dark" aria-label="方框"><svg><use href="#sq"/></svg></button><button aria-label="屏幕"><svg><use href="#pc"/></svg></button><button aria-label="魔棒"><svg><use href="#wand"/></svg></button><i class="sep"></i>
        <button class="dark" aria-label="矩形"><svg><use href="#rect"/></svg></button><button class="no">NO</button><button aria-label="全球"><svg><use href="#pcglobe"/></svg></button><i class="sep"></i>
        <button aria-label="连接"><svg><use href="#call"/></svg></button><button aria-label="圆盘"><svg><use href="#disc"/></svg></button><i class="sep"></i><button aria-label="数据库"><svg><use href="#db"/></svg></button><i class="sep"></i><button aria-label="停止"><svg><use href="#err"/></svg></button><i class="sep"></i>
        <button class="txt">制图工具</button><i class="sep"></i><button class="txt">图形裁剪</button><button aria-label="多边形"><svg><use href="#penta"/></svg></button><i class="sep"></i>
        <button aria-label="保存编辑"><svg><use href="#dsave"/></svg></button><button aria-label="检查"><svg><use href="#check"/></svg></button><i class="sep"></i>
        <button aria-label="面"><svg><use href="#rect"/></svg></button><button aria-label="房屋"><svg><use href="#house"/></svg></button><button aria-label="画笔"><svg><use href="#check"/></svg></button><button aria-label="表"><svg><use href="#attr"/></svg></button><i class="sep"></i>
        <button class="txt">数据处理</button><i class="sep"></i><button class="txt">数据空间分析</button><i class="sep"></i><button class="txt">其他</button>
        <button class="more" aria-label="更多"></button>
      </div>
    </div>
  </div>

  <div class="work">
    <aside class="side">
      <section class="panel toc">
        <div class="phead"><h2>内容列表</h2><button aria-label="固定"><svg><use href="#pin"/></svg></button><button aria-label="关闭"><svg><use href="#close"/></svg></button></div>
        <div class="ptools">
          <button aria-label="按绘制顺序"><svg><use href="#torder"/></svg></button><button class="on" aria-label="按源"><svg><use href="#tsource"/></svg></button><button aria-label="按可见性"><svg><use href="#tvis"/></svg></button><button aria-label="按选择"><svg><use href="#tsel"/></svg></button><i class="sep"></i><button aria-label="选项"><svg><use href="#list"/></svg></button>
        </div>
        <ul class="tree">
          <li><i class="pm minus"></i><svg><use href="#layers"/></svg><b>图层</b></li>
          <li class="l2"><i class="pm minus"></i><svg><use href="#folder"/></svg><span>G:\公众号\ArcGIS使用已知坐标点转面_E</span></li>
          <li class="l3"><svg><use href="#tbl"/></svg><span class="sel">简化龙$</span></li>
        </ul>
        <div class="hscroll"><i class="chev l"></i><div class="thumb"></div><i class="chev r"></i></div>
        <div class="redbox"></div>
      </section>
      <section class="panel box">
        <div class="phead"><h2>ArcToolbox</h2><button aria-label="固定"><svg><use href="#pin"/></svg></button><button aria-label="关闭"><svg><use href="#close"/></svg></button></div>
        <div class="pbody">
          <ul class="tools">
            <li class="root"><svg><use href="#tbroot"/></svg>ArcToolbox</li>
            <li><i class="pm"></i><svg><use href="#toolbox"/></svg>3D Analyst 工具</li>
            <li><i class="pm"></i><svg><use href="#toolbox"/></svg>Data Interoperability 工具</li>
            <li><i class="pm"></i><svg><use href="#toolbox"/></svg>Geostatistical Analyst 工具</li>
            <li><i class="pm"></i><svg><use href="#toolbox"/></svg>Network Analyst 工具</li>
            <li><i class="pm"></i><svg><use href="#toolbox"/></svg>Schematics 工具</li>
            <li><i class="pm"></i><svg><use href="#toolbox"/></svg>Spatial Analyst 工具</li>
            <li><i class="pm"></i><svg><use href="#toolbox"/></svg>Tracking Analyst 工具</li>
            <li><i class="pm"></i><svg><use href="#toolbox"/></svg>编辑工具</li>
            <li><i class="pm"></i><svg><use href="#toolbox"/></svg>地理编码工具</li>
            <li><i class="pm"></i><svg><use href="#toolbox"/></svg>多维工具</li>
            <li><i class="pm"></i><svg><use href="#toolbox"/></svg>分析工具</li>
            <li><i class="pm"></i><svg><use href="#toolbox"/></svg>服务器工具</li>
            <li><i class="pm"></i><svg><use href="#toolbox"/></svg>空间统计工具</li>
            <li><i class="pm"></i><svg><use href="#toolbox"/></svg>数据管理工具</li>
            <li><i class="pm"></i><svg><use href="#toolbox"/></svg>线性参考工具</li>
            <li><i class="pm"></i><svg><use href="#toolbox"/></svg>要素按属性分组导出工具箱</li>
            <li><i class="pm"></i><svg><use href="#toolbox"/></svg>制图工具</li>
          </ul>
          <div class="vscroll"><i class="chev u"></i><div class="thumb"></div><i class="chev d"></i></div>
        </div>
      </section>
      <div class="tabs">
        <button><svg><use href="#result"/></svg>结果</button><button class="cur"><svg><use href="#toolbox"/></svg>ArcToolbox</button><button><svg><use href="#ident"/></svg>识别</button>
      </div>
    </aside>
    <main class="map">
      <p class="lyric pink">但我已决定必须离开你</p>
      <p class="lyric gold">也许你以后会改变自己</p>
      <div class="mark">
        <svg viewBox="0 0 46 38"><g fill="#fff" stroke="#a4a4a4" stroke-width="1"><path d="M17 2C8 2 1 8 1 15c0 4 2 7 6 10l-2 5 6-3c3 1 6 1 9 1 8-1 13-6 13-13S25 2 17 2z"/><path d="M31 14c-8 0-14 5-14 11s6 11 14 11c2 0 4 0 6-1l5 2-1-4c3-2 4-5 4-8 0-6-6-11-14-11z"/></g><g fill="none" stroke="#999"><path d="M10 11a2 2 0 0 1 4 0M20 11a2 2 0 0 1 4 0M24 22a2 2 0 0 1 4 0M34 22a2 2 0 0 1 4 0"/></g></svg>
        <span>Gis技术分享</span>
      </div>
    </main>
    <nav class="dock">
      <button><svg><use href="#wimg"/></svg><span>影像分析</span></button>
      <button><svg><use href="#lista"/></svg><span>属性</span></button>
      <button><svg><use href="#wcat"/></svg><span>目录</span></button>
      <button><svg><use href="#wsearch"/></svg><span>搜索</span></button>
      <button><svg><use href="#create"/></svg><span>创建要素</span></button>
    </nav>
  </div>

  <div class="row draw">
    <div class="band w384">
      <i class="grip"></i>
      <button class="txt">绘制(D)</button><button class="dark" aria-label="选择元素"><svg><use href="#cursor"/></svg></button><button aria-label="旋转"><svg><use href="#rcirc"/></svg></button><button aria-label="缩放到元素"><svg><use href="#attr"/></svg></button><i class="sep"></i>
      <button class="drop far dark" aria-label="矩形"><svg><use href="#rect"/></svg></button><button class="drop far ltr"><b>A</b></button><button aria-label="编辑折点"><svg><use href="#poly"/></svg></button>
      <span class="pair"><span class="combo w96 frame"><svg><use href="#font"/></svg><select aria-label="字体"><option>宋体</option></select></span><span class="combo w25 frame"><select aria-label="字号"><option>10</option></select></span></span>
      <button class="ltr"><b>B</b></button><button class="ltr"><em>I</em></button><button class="ltr"><u>U</u></button><i class="sep"></i>
      <button class="drop far" aria-label="字体颜色"><svg><use href="#acol"/></svg></button><button class="drop far" aria-label="填充颜色"><svg><use href="#fill"/></svg></button><button class="drop far" aria-label="线颜色"><svg><use href="#brush"/></svg></button><button class="drop far" aria-label="标记颜色"><svg><use href="#mark"/></svg></button>
      <button class="more" aria-label="更多"></button>
    </div>
    <div class="band w219">
      <i class="grip"></i>
      <button aria-label="数据驱动"><svg><use href="#ddp"/></svg></button><button aria-label="刷新"><svg><use href="#house"/></svg></button><button aria-label="页"><svg><use href="#attr"/></svg></button><i class="sep"></i>
      <button aria-label="首页"><svg><use href="#first"/></svg></button><button aria-label="上一页"><svg><use href="#prev"/></svg></button>
      <span class="combo w70 pale"><select aria-label="页名"><option>显示名称</option></select></span>
      <button aria-label="下一页"><svg><use href="#next"/></svg></button><button aria-label="末页"><svg><use href="#last"/></svg></button><i class="sep"></i>
      <button class="txt">页面文本(P)</button>
      <button class="more" aria-label="更多"></button>
    </div>
    <div class="band w424">
      <i class="grip"></i>
      <button class="txt">谷歌地图</button><i class="sep"></i><button class="txt">高德地图</button><button class="txt">天地图</button><button class="txt">搜搜地图</button><i class="sep"></i><button class="txt">必应地图</button><button class="txt">其它地图</button><i class="sep"></i>
      <span class="combo w96 plain"><select aria-label="切片图层"><option>切片图层列表</option></select></span><button aria-label="加载"><svg><use href="#gline"/></svg></button><i class="sep"></i>
      <button class="txt">选项...</button><i class="sep"></i><button class="txt bare">用户/注册</button><button aria-label="信息"><svg><use href="#info"/></svg></button>
      <button class="more" aria-label="更多"></button>
    </div>
  </div>
  <footer class="status"><span>-961.449&ensp; 1016.355 未知单位</span></footer>

  <div class="ime">
    <span>英</span><span class="comma">,</span>
    <svg viewBox="0 0 10 10"><path d="M6 0a5 5 0 1 1-6 7q7 0 6-7z"/></svg>
    <svg viewBox="0 0 10 10"><path d="M3 1q2 1.500 4 0l3 2-1.500 2.500L8 5v5H2V5l-.500.500L0 3z"/></svg>
  </div>
</div>
</body>
</html>
```
FILE: styles.css
```
* { box-sizing: border-box; }
body {
  margin: 0;
  font: 7px/11px "Open Sans", "Noto Sans CJK SC", sans-serif;
  color: #1a1a1a;
  background: #f0f0f0;
}
button, select, input { font: inherit; color: inherit; margin: 0; padding: 0; border: 0; background: none; outline: 0; }
h1, h2, p, ul { margin: 0; padding: 0; font: inherit; list-style: none; }
.sprite { position: absolute; width: 0; height: 0; }
.app { position: relative; display: flex; flex-direction: column; min-height: 100vh; }

/* title and menu */
.title { display: flex; align-items: center; gap: 2px; height: 13px; background: #fff; }
.title .ico { width: 11px; height: 11px; }
.title h1 { flex: 1; }
.winbtns { display: flex; gap: 16px; padding-right: 9px; }
.winbtns button { display: flex; width: 10px; justify-content: center; }
.winbtns svg { width: 8px; height: 8px; fill: none; stroke: #333; }
.menu { display: flex; gap: 9px; height: 15px; align-items: center; padding-left: 7px; background: linear-gradient(90deg, #f2f2f2, #fbfbfb); }

/* toolbars */
.toolbars { background: linear-gradient(90deg, #f3f3f3, #f9f9f9); }
.row { display: flex; gap: 2px; padding-left: 2px; }
.band { display: flex; align-items: center; justify-content: space-between; height: 15px; min-width: 0; flex: none; }
.toolbars .row + .row .band { height: 16px; }
.toolbars .row:last-child .band { height: 15px; }
.w347 { width: 347px; } .w216 { width: 216px; } .w227 { width: 227px; } .w195 { width: 195px; }
.w246 { width: 246px; } .w295 { width: 295px; } .w171 { width: 171px; } .w349 { width: 349px; }
.w384 { width: 384px; } .w219 { width: 219px; } .w424 { width: 424px; }
.grow { flex: 1; }
.texts { justify-content: flex-start; gap: 3px; }
.texts .end { margin-left: auto; }
.grip { width: 3px; height: 10px; border-left: 1px dotted #a8a8a8; margin-left: 1px; }
.sep { width: 1px; height: 9px; background: #c9c9c9; flex: none; }
.band button, .ptools button { display: flex; align-items: center; justify-content: center; flex: none; color: #b4b4b4; }
.band svg, .ptools svg { width: 11px; height: 11px; display: block; }
.band .dark { color: #1c1c1c; }
.band .mid { color: #8c8c8c; }
.band .on, .ptools .on { border: 1px solid #69aee6; background: #cfe6f8; height: 13px; }
.band .soft { border-color: #a9cce2; background: #e6eff4; }
.drop::after, .txt::after { content: ""; border: 2px solid transparent; border-top-color: #1a1a1a; border-bottom: 0; margin-left: 1px; }
.faint::after { border-top-color: #aaa; }
.band .far::after { margin-left: 3px; }
.band .txt { color: #111; white-space: nowrap; }
.band .wide::after { margin-left: 4px; }
.band .bare::after { display: none; }
.band .no { color: #111; font-weight: 700; font-size: 6px; width: 12px; }
.band .ltr { color: #222; font: 9px/11px "Liberation Serif", serif; min-width: 11px; }
.ltr em { font-weight: 700; }
.ltr u { font-weight: 700; }
.band .more { width: 7px; height: 14px; background: linear-gradient(#f4f4f4, #b5b5b5); align-items: flex-end; padding-bottom: 2px; }
.more::after { content: ""; width: 4px; height: 4px; border-top: 1px solid #222; background: linear-gradient(#222, #222) center 1px / 2px 1px no-repeat; }

/* combo boxes */
.combo { position: relative; display: flex; align-items: center; height: 11px; flex: none; background: #fff; }
.combo select { appearance: none; flex: 1; min-width: 0; height: 9px; line-height: 9px; padding-left: 2px; opacity: 1; }
.combo::after { content: ""; position: absolute; right: 4px; top: 3px; width: 3px; height: 3px; border: solid #666; border-width: 0 1px 1px 0; transform: rotate(45deg); pointer-events: none; }
.w82 { width: 82px; } .w34 { width: 34px; } .w100 { width: 100px; } .w96 { width: 96px; } .w25 { width: 25px; } .w70 { width: 70px; }
.pale { border: 1px solid #e0e0e0; color: #777; background: #fafafa; }
.pale::after { border-color: #bbb; }
.sunk { border: 1px solid #a0a0a0; border-top-color: #6e6e6e; border-left-color: #6e6e6e; background: #efefef; }
.gray { background: #cdcdcd; }
.gray::after { border-color: #aaa; }
.combo.frame { border: 1px solid #a8a8a8; height: 12px; }
.combo.frame svg { width: 10px; height: 10px; }
.plain { background: #fbfbfb; color: #777; }
.plain::after { border: 2px solid transparent; border-top-color: #111; border-bottom: 0; width: 0; height: 0; top: 5px; right: 0; transform: none; }
.pair { display: flex; }
.num { width: 33px; height: 11px; border: 1px solid #a8a8a8; background: #fff; padding-left: 2px; }
.num::-webkit-inner-spin-button { opacity: 1; height: 9px; }

/* work area */
.work { display: flex; flex: 1; min-height: 0; }
.side { width: 160px; display: flex; flex-direction: column; flex: none; }
.panel { position: relative; display: flex; flex-direction: column; }
.toc { height: 255px; }
.box { flex: 1; margin-top: 3px; }
.phead { display: flex; align-items: center; height: 12px; padding: 0 2px; gap: 2px; background: linear-gradient(90deg, #bdd0e4, #d8e5f3); }
.phead h2 { flex: 1; }
.phead button, .phead svg { display: block; width: 7px; height: 7px; }
.ptools { display: flex; align-items: center; gap: 1px; height: 15px; padding-left: 3px; background: #f2f2f2; }
.ptools .sep { margin: 0 2px; }
.tree { flex: 1; background: #fff; border: 1px solid #b4b4b4; border-bottom: 0; }
.tree li { display: flex; align-items: center; gap: 3px; height: 11px; padding-left: 4px; white-space: nowrap; }
.tree .l2 { padding-left: 14px; }
.tree .l3 { padding-left: 33px; }
.tree svg, .tools svg { width: 9px; height: 9px; flex: none; }
.tree .sel { background: #0078d7; color: #fff; }
.pm { position: relative; width: 5px; height: 5px; border: 1px solid #b4bcc6; background: linear-gradient(#3c5a96, #3c5a96) center / 3px 1px no-repeat, linear-gradient(#3c5a96, #3c5a96) center / 1px 3px no-repeat, #fff; flex: none; }
.pm.minus { background: linear-gradient(#3c5a96, #3c5a96) center / 3px 1px no-repeat, #fff; }
.hscroll { display: flex; align-items: center; height: 11px; padding: 0 4px; gap: 3px; background: #f1f1f1; border: 1px solid #b4b4b4; border-top: 0; }
.hscroll .thumb { width: 103px; height: 9px; background: #cdcdcd; margin-right: auto; }
.chev { width: 4px; height: 4px; border: solid #555; border-width: 1px 1px 0 0; transform: rotate(45deg); flex: none; }
.chev.l { transform: rotate(225deg); }
.chev.u { transform: rotate(-45deg); }
.chev.d { transform: rotate(135deg); }
.redbox { position: absolute; left: 6px; right: -1px; top: 36px; height: 93px; border: 4px solid #ee1c25; border-radius: 2px; }
.pbody { flex: 1; display: flex; min-height: 0; background: #fff; border: 1px solid #b4b4b4; overflow: hidden; }
.tools { flex: 1; display: grid; grid-auto-rows: 1fr; margin-bottom: -2px; }
.tools li { display: flex; align-items: center; gap: 3px; padding-left: 4px; white-space: nowrap; }
.tools .root { padding-left: 2px; gap: 2px; }
.vscroll { display: flex; flex-direction: column; align-items: center; gap: 2px; width: 10px; padding: 4px 0; background: #f1f1f1; }
.vscroll .thumb { flex: 1; width: 9px; background: #cdcdcd; margin-bottom: 26px; }
.tabs { display: flex; height: 12px; padding-left: 1px; }
.tabs button { display: flex; align-items: center; gap: 2px; padding: 0 2px; border: 1px solid #c4c4c4; border-top: 0; color: #777; }
.tabs svg { width: 9px; height: 9px; }
.tabs .cur { background: #fff; color: #111; }
.map { position: relative; flex: 1; margin-left: 2px; background: #fff; border-left: 1px solid #828282; border-top: 1px solid #828282; border-bottom: 1px solid #e4e4e4; }
.lyric { position: absolute; writing-mode: vertical-rl; font: 700 15px/15px "Noto Sans CJK SC", sans-serif; white-space: nowrap; }
.pink { right: 31px; top: 8px; color: #f2a8a8; text-shadow: 0 0 1px #999, 1px 1px 0 #c9b4b4; }
.gold { right: 4px; top: 285px; color: transparent; font-weight: 500; background: linear-gradient(90deg, #f8c49c, #f6f08a 60%); background-clip: text; -webkit-background-clip: text; filter: drop-shadow(0 0 1px #999); }
.mark { position: absolute; right: 24px; bottom: 2px; display: flex; align-items: center; gap: 6px; }
.mark svg { width: 44px; height: 36px; }
.mark span { font: 27px/38px "Noto Sans CJK SC", sans-serif; color: #fff; text-shadow: 1px 1px 1px #777, 0 0 1px #bbb; }
.dock { width: 13px; flex: none; display: flex; flex-direction: column; padding-left: 1px; }
.dock button { display: flex; flex-direction: column; align-items: center; padding: 2px 0 1px; border: 1px solid #bcbcbc; border-right: 0; border-radius: 2px 0 0 2px; color: #555; background: #f4f4f4; }
.dock svg { width: 10px; height: 9px; }
.dock span { writing-mode: vertical-rl; text-orientation: sideways; line-height: 9px; }

/* bottom bars */
.draw { background: #f7f7f7; padding-top: 1px; }
.draw .band { height: 15px; }
.draw .w424 { margin-left: 3px; }
.status { display: flex; justify-content: flex-end; height: 12px; padding-right: 67px; align-items: center; }
.ime { position: absolute; right: 0; bottom: 19px; width: 22px; height: 46px; padding: 2px 4px 0 0; display: flex; flex-direction: column; align-items: center; gap: 1px; border-radius: 3px 0 0 3px; background: #383838; color: #fff; border-right: 3px solid #4a4a4a; font-size: 8px; }
.ime .comma { line-height: 5px; }
.ime svg { width: 10px; height: 10px; fill: #fff; flex: none; }
```
